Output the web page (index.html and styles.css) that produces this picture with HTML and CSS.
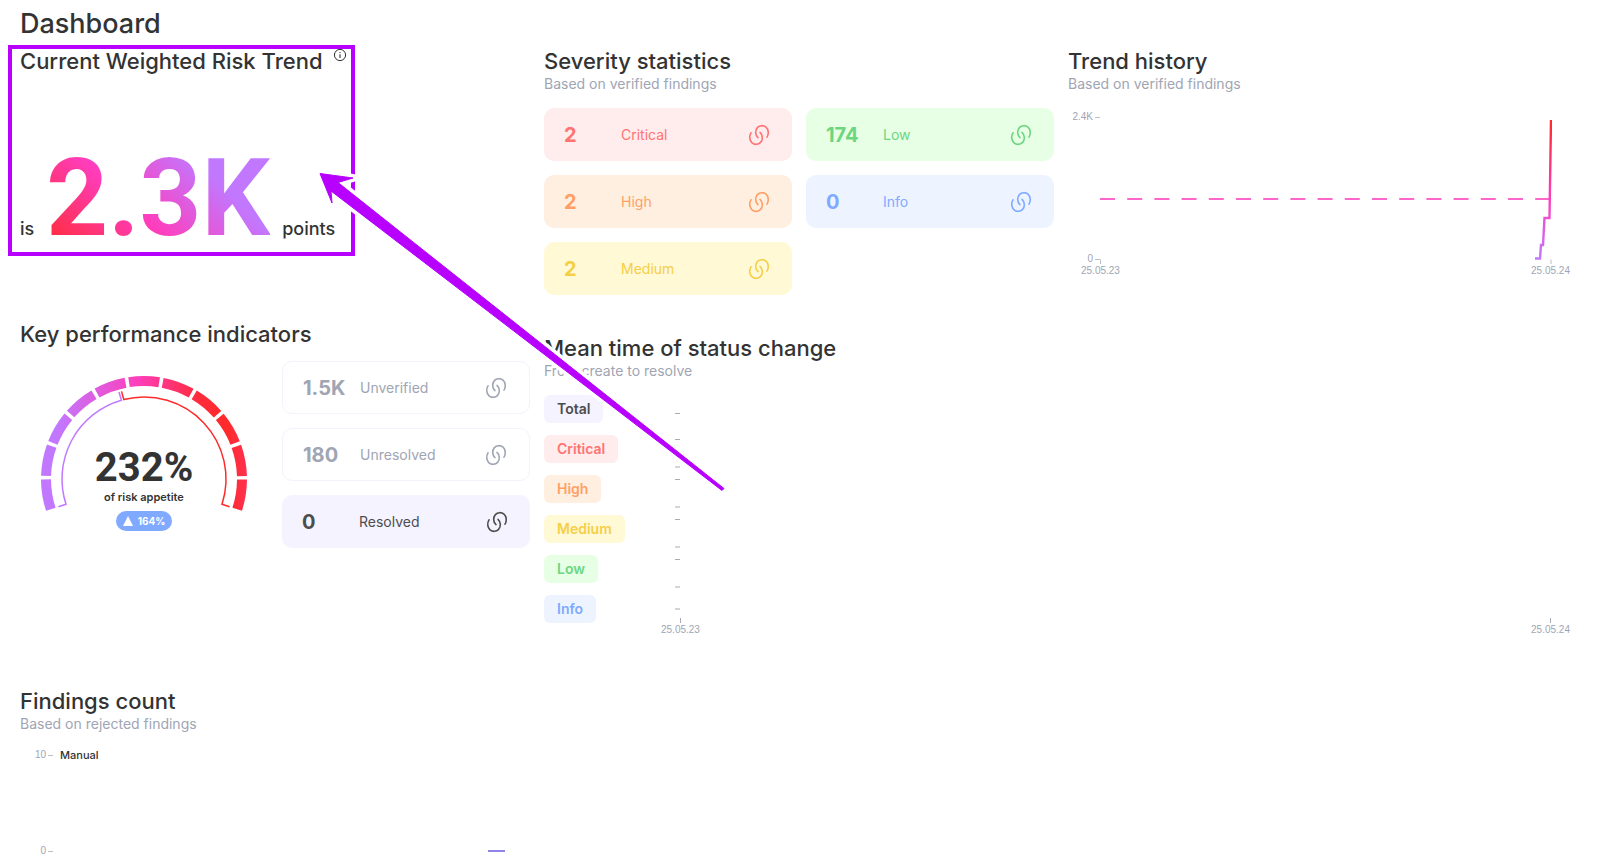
FILE: index.html
```html
<!DOCTYPE html>
<html lang="en">
<head>
<meta charset="utf-8">
<meta name="viewport" content="width=device-width, initial-scale=1">
<title>Dashboard</title>
<link rel="stylesheet" href="styles.css">
</head>
<body>
<svg class="defs" aria-hidden="true">
  <symbol id="link" viewBox="0 0 22 22">
    <path d="M19 13.200C21 10 20.600 5.500 18 3.200C15.500 1 11.500 1.200 9.400 3.600C7 6.300 7 11 10 13.600M3 8.800C1 12 1.400 16.500 4 18.800C6.500 21 10.500 20.800 12.600 18.400C15 15.700 15 11 12 8.400" fill="none" stroke="currentColor" stroke-width="1.600" stroke-linecap="round"/>
  </symbol>
</svg>
<main class="page">
  <h1 class="page-title">Dashboard</h1>
  <div class="board">
    <div class="side">
      <section class="risk">
        <h2 class="heading">Current Weighted Risk Trend
          <svg class="info-icon" viewBox="0 0 14 14" aria-hidden="true"><circle cx="7" cy="6" r="5.600" fill="none" stroke="currentColor"/><path d="M7 5.200V9M7 3v1.100" stroke="currentColor" stroke-width="1.100"/></svg>
        </h2>
        <p class="score"><span>is</span><strong class="score-value">2.3K</strong><span>points</span></p>
      </section>

      <section class="kpi">
        <h2 class="heading">Key performance indicators</h2>
        <div class="kpi-body">
          <div class="gauge">
            <svg class="gauge-art" viewBox="0 0 208 140" aria-hidden="true">
              <defs>
                <linearGradient id="arc" gradientUnits="userSpaceOnUse" x1="1" y1="0" x2="207" y2="0">
                  <stop offset="0" stop-color="#c178ff"/><stop offset=".08" stop-color="#c178ff"/><stop offset=".48" stop-color="#ff3db8"/><stop offset=".76" stop-color="#ff2b3c"/><stop offset=".9" stop-color="#ff2a2a"/><stop offset="1" stop-color="#ff3050"/>
                </linearGradient>
              </defs>
              <path d="M10.8 134.3A98 98 0 1 1 197.2 134.3" fill="none" stroke="url(#arc)" stroke-width="10" stroke-dasharray="30.4 3.5"/>
              <path d="M18.4 131.8L26 129.3A82 82 0 0 1 81.4 25.2L79 17" fill="none" stroke="#c178ff" stroke-width="1.5"/>
              <path d="M189.6 131.8L182 129.3A82 82 0 0 0 83.8 24.5L81.5 16.4" fill="none" stroke="#ff2b2b" stroke-width="1.5"/>
            </svg>
            <div class="gauge-text">
              <strong class="gauge-value">232%</strong>
              <span class="gauge-note">of risk appetite</span>
              <span class="delta"><svg class="delta-icon" viewBox="0 0 10 10" aria-hidden="true"><path d="M5 0L10 10H0z" fill="currentColor"/></svg>164%</span>
            </div>
          </div>
          <div class="cards">
            <a class="card outline" href="#unverified"><b>1.5K</b><span>Unverified</span><svg class="link"><use href="#link"/></svg></a>
            <a class="card outline" href="#unresolved"><b>180</b><span>Unresolved</span><svg class="link"><use href="#link"/></svg></a>
            <a class="card total" href="#resolved"><b>0</b><span>Resolved</span><svg class="link"><use href="#link"/></svg></a>
          </div>
        </div>
      </section>

      <section>
        <h2 class="heading">Findings count</h2>
        <p class="sub">Based on rejected findings</p>
        <div class="count-chart">
          <div class="count-scale"><span>10</span><span>0</span></div>
          <div class="count-plot"><span>Manual</span><i class="count-bar"></i></div>
        </div>
      </section>
    </div>

    <div class="wide">
      <section>
        <h2 class="heading">Severity statistics</h2>
        <p class="sub">Based on verified findings</p>
        <div class="cards severity">
          <a class="card critical" href="#critical"><b>2</b><span>Critical</span><svg class="link"><use href="#link"/></svg></a>
          <a class="card high" href="#high"><b>2</b><span>High</span><svg class="link"><use href="#link"/></svg></a>
          <a class="card medium" href="#medium"><b>2</b><span>Medium</span><svg class="link"><use href="#link"/></svg></a>
          <a class="card low" href="#low"><b>174</b><span>Low</span><svg class="link"><use href="#link"/></svg></a>
          <a class="card info" href="#info"><b>0</b><span>Info</span><svg class="link"><use href="#link"/></svg></a>
        </div>
      </section>

      <section>
        <h2 class="heading">Trend history</h2>
        <p class="sub">Based on verified findings</p>
        <div class="trend-chart">
          <div class="trend-scale"><span>2.4K</span><span>0</span></div>
          <svg class="trend-plot" viewBox="0 0 452 154" preserveAspectRatio="none" aria-hidden="true">
            <defs>
              <linearGradient id="rise" gradientUnits="userSpaceOnUse" x1="0" y1="9" x2="0" y2="148">
                <stop offset="0" stop-color="#ff2a2a"/><stop offset=".55" stop-color="#ff3dbb"/><stop offset="1" stop-color="#c178ff"/>
              </linearGradient>
            </defs>
            <path d="M0 88H450" fill="none" stroke="#ff66cc" stroke-width="2" stroke-dasharray="15 12.200"/>
            <path d="M435 147.500H440L441 134H443L444.500 107H449.500L451 9" fill="none" stroke="url(#rise)" stroke-width="2.400"/>
            <path d="M.5 148.500V153M451 148.500V153" stroke="#b9bec9"/>
          </svg>
          <div class="dates trend-dates"><span>25.05.23</span><span>25.05.24</span></div>
        </div>
      </section>

      <section class="mean">
        <h2 class="heading">Mean time of status change</h2>
        <p class="sub">From create to resolve</p>
        <div class="mean-chart">
          <ul class="tags">
            <li class="tag total">Total</li>
            <li class="tag critical">Critical</li>
            <li class="tag high">High</li>
            <li class="tag medium">Medium</li>
            <li class="tag low">Low</li>
            <li class="tag info">Info</li>
          </ul>
          <div class="mean-plot">
            <svg class="ticks" viewBox="0 0 6 229" aria-hidden="true"><path d="M0 18.500H5M0 44.500H5M0 72H5M0 84.500H5M0 112H5M0 124.500H5M0 152H5M0 164.500H5M0 192H5M0 214H5M5.500 223V228" stroke="#a6abb8"/></svg>
            <svg class="ticks" viewBox="0 0 6 229" aria-hidden="true"><path d="M.5 223V228" stroke="#a6abb8"/></svg>
          </div>
          <div class="dates mean-dates"><span>25.05.23</span><span>25.05.24</span></div>
        </div>
      </section>
    </div>
  </div>
</main>

<div class="highlight"></div>
<svg class="arrow" viewBox="0 0 420 330" aria-hidden="true">
  <path d="M10 8.500L43 13L28 17.500L414 323.500L412 325.500L21 26L22 38Z" fill="#fff" stroke="#fff" stroke-width="8" stroke-linejoin="round"/>
  <path d="M10 8.500L43 13L28 17.500L414 323.500L412 325.500L21 26L22 38Z" fill="#b800ff" stroke="#b800ff" stroke-linejoin="round"/>
</svg>
</body>
</html>
```
FILE: styles.css
```css
* { box-sizing: border-box; }
body {
  margin: 0;
  position: relative;
  background: #fff;
  color: #333;
  font-family: Inter, "Open Sans", sans-serif;
  font-size: 13px;
}
h1, h2, p, ul { margin: 0; padding: 0; }
.defs { position: absolute; width: 0; height: 0; }

.page { padding: 9px 20px 6px; }
.page-title { font-size: 27px; line-height: 30px; font-weight: 500; }
.board {
  display: grid;
  grid-template-columns: repeat(3, minmax(0, 1fr));
  gap: 14px;
  margin-top: 10px;
}
.side { display: flex; flex-direction: column; }
.wide {
  grid-column: span 2;
  display: grid;
  grid-template-columns: repeat(2, minmax(0, 1fr));
  column-gap: 14px;
  row-gap: 41px;
  align-content: start;
}
.heading { font-size: 22px; line-height: 24px; font-weight: 500; }
.sub { color: #a0a5b3; font-size: 14px; line-height: 22px; }

/* Weighted risk */
.risk { height: 273px; }
.risk .heading { display: flex; gap: 11px; }
.info-icon { width: 14px; height: 14px; }
.score {
  display: flex;
  align-items: baseline;
  gap: 12px;
  margin-top: 61px;
  font-size: 18px;
  font-weight: 500;
}
.score-value {
  font: bold 108px/128px Roboto, sans-serif;
  color: transparent;
  background: linear-gradient(45deg, #ff2a2a 2%, #ff3dbb 40%, #c178ff 72%);
  background-clip: text;
  -webkit-background-clip: text;
}

/* Key performance indicators */
.kpi { height: 367px; }
.kpi-body {
  display: grid;
  grid-template-columns: repeat(2, minmax(0, 1fr));
  gap: 14px;
  margin-top: 15px;
}
.gauge { display: grid; justify-items: center; align-content: start; padding-top: 14px; }
.gauge-art, .gauge-text { grid-area: 1 / 1; }
.gauge-art { width: 208px; height: 140px; }
.gauge-text {
  display: flex;
  flex-direction: column;
  align-items: center;
  padding-top: 71px;
}
.gauge-value { font: bold 40px/44px Roboto, sans-serif; }
.gauge-note { font-size: 11px; line-height: 14px; font-weight: 600; }
.delta {
  display: flex;
  align-items: center;
  gap: 5px;
  height: 20px;
  margin-top: 7px;
  padding: 0 7px;
  border-radius: 10px;
  background: #80aaff;
  color: #fff;
  font-size: 10px;
  font-weight: 700;
}
.delta-icon { width: 10px; height: 10px; }

/* Stat cards */
.cards { display: grid; grid-auto-rows: 53px; gap: 14px; }
.severity {
  grid-template-rows: repeat(3, 53px);
  grid-template-columns: repeat(2, minmax(0, 1fr));
  grid-auto-flow: column;
  margin-top: 13px;
}
.card {
  display: flex;
  align-items: center;
  padding: 0 22px 0 20px;
  border-radius: 10px;
  font-size: 14px;
  text-decoration: none;
}
.card b { width: 57px; font-size: 20px; font-weight: 700; }
.card span { flex: 1; }
.link { width: 22px; height: 22px; }
.outline { color: #a0a5b3; border: 1px solid #f3f2fd; }
.total { color: #4d4d4d; background: #f5f3ff; }
.critical { color: #ff7373; background: #ffecec; }
.high { color: #ff9f66; background: #ffefe0; }
.medium { color: #f5cf47; background: #fff9d6; }
.low { color: #6cd680; background: #e7ffe4; }
.info { color: #80aaff; background: #edf4ff; }

/* Charts */
.dates {
  display: flex;
  justify-content: space-between;
  padding-right: 8px;
  color: #a0a5b3;
  font: 10px/12px "Liberation Sans", sans-serif;
}
.trend-chart {
  display: grid;
  grid-template-columns: 32px minmax(0, 1fr);
  margin-top: 16px;
}
.trend-plot { width: calc(100% - 26px); height: 154px; }
.trend-scale, .count-scale {
  display: flex;
  flex-direction: column;
  justify-content: space-between;
  color: #a0a5b3;
  font: 10px/12px "Liberation Sans", sans-serif;
}
.trend-scale { height: 154px; }
.trend-scale span, .count-scale span {
  display: flex;
  justify-content: flex-end;
  align-items: center;
  gap: 2px;
}
.trend-scale span::after, .count-scale span::after {
  content: "";
  width: 5px;
  height: 1px;
  background: #b9bec9;
}
.trend-dates { grid-column: 1 / -1; padding-left: 13px; }

.mean { grid-column: 1 / -1; }
.mean-chart {
  display: grid;
  grid-template-columns: 131px minmax(0, 1fr);
  margin-top: 13px;
}
.tags {
  display: flex;
  flex-direction: column;
  align-items: flex-start;
  gap: 12px;
  list-style: none;
}
.tag {
  padding: 0 13px;
  border-radius: 6px;
  font-size: 14px;
  line-height: 28px;
  font-weight: 600;
}
.mean-plot { display: flex; justify-content: space-between; padding-right: 22px; }
.ticks { width: 6px; height: 229px; }
.mean-dates { grid-column: 1 / -1; padding-left: 117px; }

.count-chart { display: flex; gap: 7px; height: 108px; margin-top: 14px; }
.count-scale { width: 33px; }
.count-plot {
  flex: 1;
  display: flex;
  flex-direction: column;
  justify-content: space-between;
  padding-bottom: 5px;
  font-size: 11px;
  line-height: 12px;
  font-weight: 500;
}
.count-bar {
  align-self: flex-end;
  width: 17px;
  height: 2px;
  margin-right: 25px;
  background: #8f85e8;
}

/* Callout over the dashboard */
.highlight {
  position: absolute;
  left: 8px;
  top: 45px;
  width: 347px;
  height: 211px;
  border: 4px solid #b800ff;
}
.arrow { position: absolute; left: 310px; top: 165px; width: 420px; height: 330px; }
```
